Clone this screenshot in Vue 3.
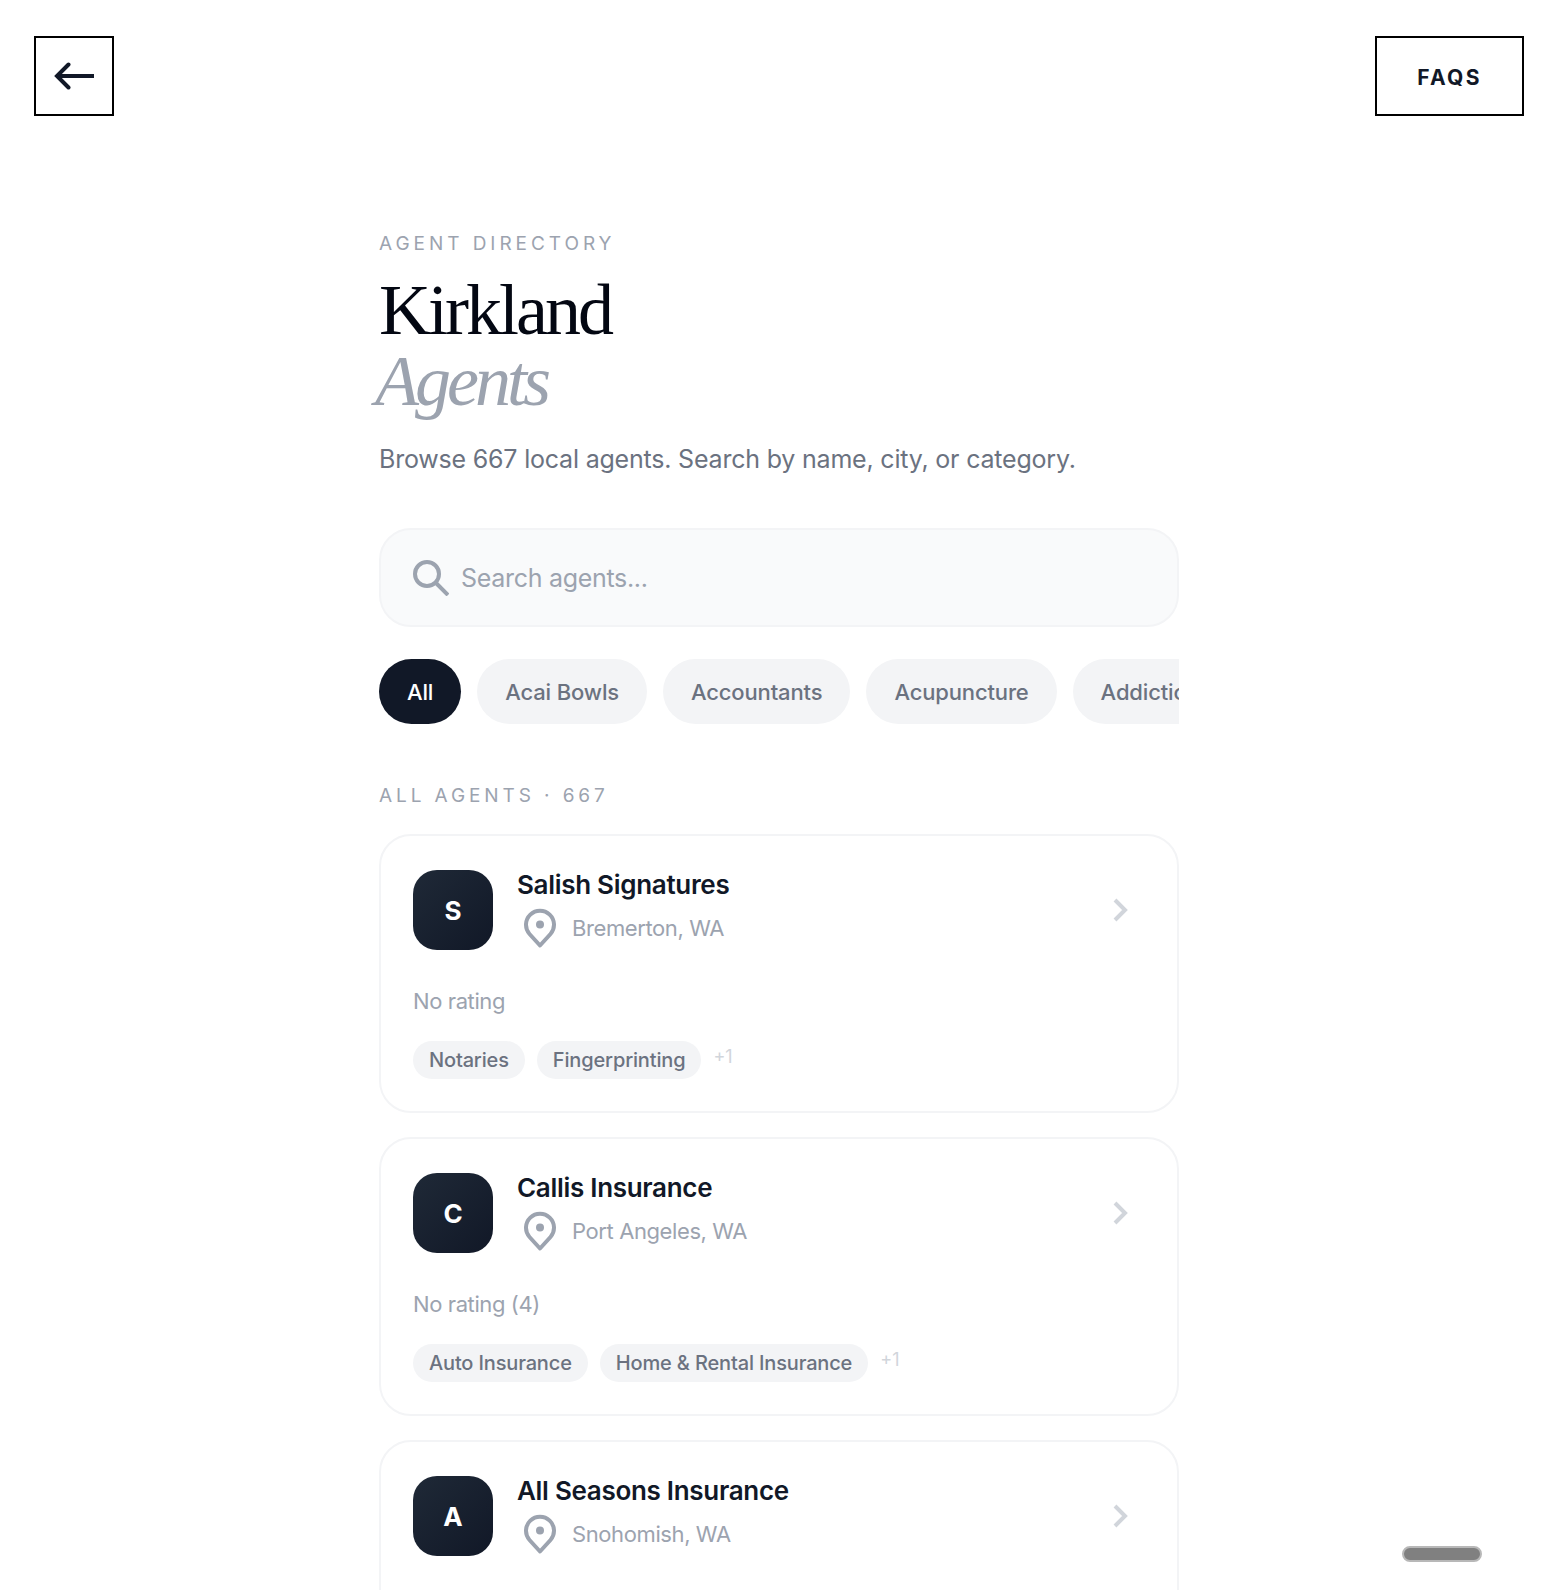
<script setup>
const categories = ['All', 'Acai Bowls', 'Accountants', 'Acupuncture', 'Addiction Treatment']

const agents = [
  { name: 'Salish Signatures', city: 'Bremerton, WA', rating: 'No rating', tags: ['Notaries', 'Fingerprinting'], more: 1 },
  { name: 'Callis Insurance', city: 'Port Angeles, WA', rating: 'No rating (4)', tags: ['Auto Insurance', 'Home & Rental Insurance'], more: 1 },
  { name: 'All Seasons Insurance', city: 'Snohomish, WA' }
]
</script>

<template>
  <div class="page">
    <header class="topbar">
      <button class="back" aria-label="Back">
        <svg width="40" height="28" viewBox="0 0 40 28" fill="none" stroke="#111827" stroke-width="4">
          <path d="M40 14H3" />
          <path d="M14.500 2.500 3 14l11.500 11.500" stroke-linecap="round" />
        </svg>
      </button>
      <button class="faqs">FAQS</button>
    </header>

    <main class="content">
      <p class="eyebrow">AGENT DIRECTORY</p>
      <h1 class="title">Kirkland<em>Agents</em></h1>
      <p class="intro">Browse 667 local agents. Search by name, city, or category.</p>

      <label class="search">
        <svg width="36" height="36" viewBox="0 0 36 36" fill="none" stroke="#9ca3af" stroke-width="4">
          <circle cx="14" cy="14" r="12" />
          <path d="M23 23l12 12" />
        </svg>
        <input type="text" placeholder="Search agents..." />
      </label>

      <div class="chips">
        <button
          v-for="(cat, i) in categories"
          :key="cat"
          class="chip"
          :class="{ active: i === 0 }"
        >{{ cat }}</button>
      </div>

      <p class="section-label">ALL AGENTS · 667</p>

      <div class="list">
        <article v-for="agent in agents" :key="agent.name" class="card">
          <div class="card-top">
            <div class="avatar">{{ agent.name[0] }}</div>
            <div class="info">
              <h2 class="name">{{ agent.name }}</h2>
              <div class="place">
                <svg width="32" height="40" viewBox="0 0 32 40" fill="none">
                  <path d="M16 37.500 5.500 26a14 14 0 1 1 21 0z" stroke="#9ca3af" stroke-width="4" stroke-linejoin="round" />
                  <circle cx="16" cy="16.500" r="4" fill="#9ca3af" />
                </svg>
                <span>{{ agent.city }}</span>
              </div>
            </div>
            <svg class="chevron" width="16" height="24" viewBox="0 0 16 24" fill="none" stroke="#d1d5db" stroke-width="4">
              <path d="M2 2l10 10L2 22" />
            </svg>
          </div>
          <p v-if="agent.rating" class="rating">{{ agent.rating }}</p>
          <div v-if="agent.tags" class="tags">
            <span v-for="tag in agent.tags" :key="tag" class="tag">{{ tag }}</span>
            <span class="more">+{{ agent.more }}</span>
          </div>
        </article>
      </div>
    </main>

    <div class="handle"></div>
  </div>
</template>

<style>
html, body {
  background: #fff;
}
</style>

<style scoped>
.page {
  position: relative;
  width: 1558px;
  height: 1590px;
  overflow: hidden;
  font-family: Inter, "Noto Sans", sans-serif;
  color: #111827;
}

.topbar {
  display: flex;
  justify-content: space-between;
  padding: 36px 34px 0;
}

.back,
.faqs {
  height: 80px;
  background: #fff;
  border: 2px solid #000;
  display: flex;
  align-items: center;
  justify-content: center;
  padding: 0;
}

.back {
  width: 80px;
}

.faqs {
  width: 149px;
  padding-top: 2px;
  font-family: Inter, sans-serif;
  font-size: 21px;
  font-weight: 700;
  letter-spacing: 0.11em;
  color: #111827;
}

.content {
  width: 800px;
  margin: 116px auto 0;
}

.eyebrow {
  margin: 0;
  font-size: 19px;
  line-height: 24px;
  letter-spacing: 3.95px;
  color: #9ca3af;
}

.title {
  margin: 19px 0 0;
  font-family: "Liberation Serif", serif;
  font-weight: 400;
  font-size: 72px;
  line-height: 71px;
  letter-spacing: -3px;
  color: #030712;
}

.title em {
  display: block;
  color: #9ca3af;
  margin-left: -4px;
  letter-spacing: -4px;
}

.intro {
  margin: 24px 0 0;
  font-size: 25px;
  line-height: 36px;
  letter-spacing: -0.2px;
  color: #6b7280;
}

.search {
  margin-top: 51px;
  height: 99px;
  box-sizing: border-box;
  display: flex;
  align-items: center;
  gap: 10px;
  padding: 0 32px;
  background: #f9fafb;
  border: 2px solid #f3f4f6;
  border-radius: 32px;
}

.search input {
  flex: 1;
  border: 0;
  outline: 0;
  background: transparent;
  font-family: inherit;
  font-size: 25px;
  letter-spacing: -0.3px;
  color: #111827;
}

.search input::placeholder {
  color: #9ca3af;
}

.chips {
  display: flex;
  gap: 16px;
  margin-top: 32px;
  overflow: hidden;
}

.chip {
  flex-shrink: 0;
  height: 65px;
  padding: 0 28px;
  border: 0;
  border-radius: 33px;
  background: #f3f4f6;
  font-family: inherit;
  font-size: 22px;
  font-weight: 500;
  letter-spacing: -0.15px;
  color: #6b7280;
}

.chip.active {
  background: #111827;
  color: #fff;
}

.section-label {
  margin: 60px 0 0;
  font-size: 19px;
  line-height: 24px;
  letter-spacing: 3.9px;
  color: #9ca3af;
}

.list {
  display: flex;
  flex-direction: column;
  gap: 24px;
  margin-top: 26px;
}

.card {
  box-sizing: border-box;
  min-height: 279px;
  padding: 34px 32px 32px;
  background: #fff;
  border: 2px solid #f3f4f6;
  border-radius: 32px;
}

.card-top {
  display: flex;
  align-items: center;
  gap: 24px;
}

.avatar {
  flex-shrink: 0;
  width: 80px;
  height: 80px;
  border-radius: 24px;
  background: linear-gradient(135deg, #1f2937, #111827);
  display: flex;
  align-items: center;
  justify-content: center;
  font-size: 26px;
  font-weight: 700;
  color: #fff;
}

.info {
  flex: 1;
  min-width: 0;
  padding-bottom: 2px;
}

.name {
  margin: 0;
  font-size: 26px;
  line-height: 30px;
  font-weight: 600;
  letter-spacing: -0.3px;
  color: #111827;
}

.place {
  display: flex;
  align-items: center;
  gap: 16px;
  margin-top: 8px;
  padding-left: 7px;
  font-size: 22px;
  letter-spacing: -0.4px;
  color: #9ca3af;
}

.chevron {
  margin-right: 16px;
}

.rating {
  margin: 35px 0 0;
  font-size: 22px;
  line-height: 32px;
  letter-spacing: -0.4px;
  color: #9ca3af;
}

.tags {
  display: flex;
  gap: 12px;
  margin-top: 24px;
}

.tag {
  height: 38px;
  padding: 0 16px;
  display: flex;
  align-items: center;
  border-radius: 19px;
  background: #f3f4f6;
  font-size: 20px;
  font-weight: 500;
  letter-spacing: -0.15px;
  color: #6b7280;
}

.more {
  font-size: 18px;
  line-height: 32px;
  color: #d1d5db;
}

.handle {
  position: absolute;
  left: 1402px;
  top: 1546px;
  width: 80px;
  height: 16px;
  box-sizing: border-box;
  border: 2px solid #b8b8b8;
  border-radius: 8px;
  background: #808080;
}
</style>
